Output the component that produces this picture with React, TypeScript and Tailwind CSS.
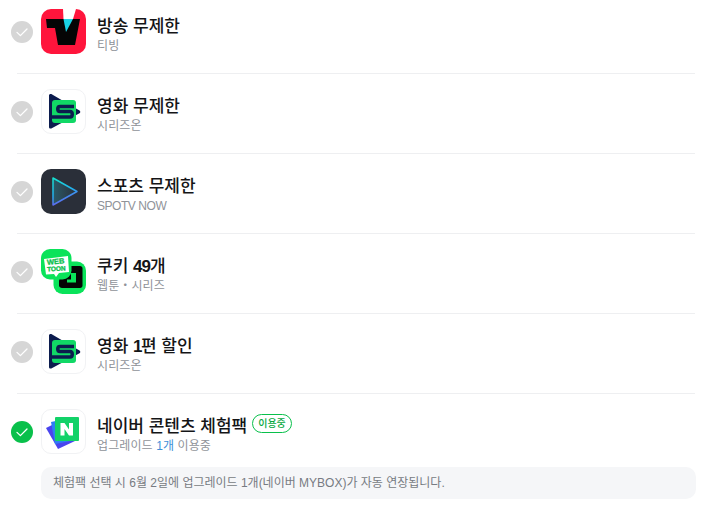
const CheckCircle = ({ active }: { active?: boolean }) => (
  <div className={`flex h-[22px] w-[22px] shrink-0 items-center justify-center rounded-full ${active ? 'bg-[#09c04b]' : 'bg-[#d6d6d6]'}`}>
    <svg width="14" height="14" viewBox="0 0 14 14" fill="none">
      <path d="M2 7.400 5.400 10.600 12 4" stroke="white" strokeWidth="1.300" strokeLinecap="round" strokeLinejoin="round" />
    </svg>
  </div>
);

const TvingIcon = () => (
  <svg width="45" height="45" viewBox="0 0 45 45">
    <rect width="45" height="45" rx="10" fill="#ff153c" />
    <path d="M22 0h13l-3 10H22.500z" fill="#fff" />
    <path d="M5 10h34l-5 26H17l-3-17H6z" fill="#050505" />
    <path d="M22.500 10H32l-7 13z" fill="#19d3e6" />
  </svg>
);

const SeriesOnIcon = () => (
  <div className="h-[45px] w-[45px] rounded-[10px] border border-[#f1f2f4] bg-white">
    <svg width="43" height="43" viewBox="0 0 43 43">
      <path d="M7 5.500c0-1.300 1.200-2 2.300-1.400L37.500 20.500c1 .6 1 2.200 0 2.800L9.300 38.400C8.200 39 7 38.300 7 37z" fill="#0c1c4e" />
      <rect x="10" y="10" width="24" height="23" rx="3" fill="#11d866" />
      <path d="M32 16.500H18c-3 0-3 5 0 5h10c3 0 3 5.500 0 5.500H10" fill="none" stroke="#0c1c4e" strokeWidth="3.500" />
    </svg>
  </div>
);

const SpotvIcon = () => (
  <svg width="45" height="45" viewBox="0 0 45 45">
    <defs>
      <linearGradient id="spotvStroke" x1="0" y1="0" x2="0.3" y2="1">
        <stop offset="0" stopColor="#16e3cf" />
        <stop offset="0.6" stopColor="#22b0ee" />
        <stop offset="1" stopColor="#6a5cf0" />
      </linearGradient>
      <linearGradient id="spotvFill" x1="0" y1="0" x2="1" y2="0">
        <stop offset="0" stopColor="#2b5a68" />
        <stop offset="1" stopColor="#2a2f39" />
      </linearGradient>
    </defs>
    <rect width="45" height="45" rx="10" fill="#2a2f39" />
    <path d="M12 9 36 22.500 12 36z" fill="url(#spotvFill)" stroke="url(#spotvStroke)" strokeWidth="1.500" strokeLinejoin="round" />
  </svg>
);

const WebtoonIcon = () => (
  <svg width="45" height="45" viewBox="0 0 45 45">
    <rect x="12.500" y="12.500" width="32.500" height="32.500" rx="9" fill="#0ae35a" />
    <path d="M21 17h18c1.500 0 2.500 1 2.500 2.500v17c0 1.500-1 2.500-2.500 2.500H21c-1.500 0-3-1-3-2.500V32z" fill="#050505" />
    <path d="M30 24h5v9.500h-9v-3h4z" fill="#0ae35a" />
    <rect width="30.500" height="30.500" rx="9" fill="#0ae35a" />
    <path d="M3 10 27 7l1 16-10 1-3 4-2-3-8 .5z" fill="#fff" />
    <text x="15" y="15" textAnchor="middle" fontSize="7.500" fontWeight="700" fill="#0ac04b" stroke="#0ac04b" strokeWidth="0.300" fontFamily="Liberation Sans" transform="rotate(-6 15 15)">WEB</text>
    <text x="15.500" y="22" textAnchor="middle" fontSize="6.500" fontWeight="700" fill="#0ac04b" stroke="#0ac04b" strokeWidth="0.300" fontFamily="Liberation Sans" transform="rotate(-3 15 22)">TOON</text>
  </svg>
);

const NaverContentsIcon = () => (
  <div className="h-[45px] w-[45px] rounded-[10px] border border-[#f1f2f4] bg-white">
    <svg width="43" height="43" viewBox="0 0 43 43">
      <path d="M4 18 20 10l13 21-17 8z" fill="#4a45ee" />
      <path d="M9 12 28 8l5 22-20 4z" fill="#2f7cf5" />
      <rect x="13" y="7" width="24" height="24" rx="1" fill="#12d268" />
      <path d="M18.500 13h4l4.500 6.500V13h4v12.500h-4L22.500 19v6.500h-4z" fill="#fff" />
    </svg>
  </div>
);

type Row = { icon: React.ReactNode; title: React.ReactNode; sub: React.ReactNode; active?: boolean; badge?: boolean };

const rows: Row[] = [
  { icon: <TvingIcon />, title: '방송 무제한', sub: '티빙' },
  { icon: <SeriesOnIcon />, title: '영화 무제한', sub: '시리즈온' },
  { icon: <SpotvIcon />, title: '스포츠 무제한', sub: <span className="tracking-[-0.45px]">SPOTV NOW</span> },
  {
    icon: <WebtoonIcon />,
    title: (
      <>
        쿠키 <span className="font-bold tracking-[-1px]">49</span>개
      </>
    ),
    sub: '웹툰・시리즈',
  },
  {
    icon: <SeriesOnIcon />,
    title: (
      <>
        영화 <span className="font-bold tracking-[-1.5px]">1</span>편 할인
      </>
    ),
    sub: '시리즈온',
  },
  {
    icon: <NaverContentsIcon />,
    title: '네이버 콘텐츠 체험팩',
    sub: (
      <>
        업그레이드 <span className="text-[#3f8fd8]">1개</span> 이용중
      </>
    ),
    active: true,
    badge: true,
  },
];

export default function App() {
  return (
    <div
      className="h-[511px] w-[713px] overflow-hidden bg-white pl-[11px] pr-[18px] pt-[9px]"
      style={{ fontFamily: '"Liberation Sans", "Noto Sans CJK KR", sans-serif' }}
    >
      {rows.map((row, i) => (
        <div key={i}>
          <div className="flex items-center">
            <CheckCircle active={row.active} />
            <div className="ml-2 shrink-0">{row.icon}</div>
            <div className="ml-[11px] flex flex-col pt-[5px]">
              <div className="flex items-center">
                <span className="text-[17px] leading-[24px] font-medium text-[#141517]">{row.title}</span>
                {row.badge && (
                  <span className="-mt-[7px] ml-[5px] flex h-[19px] items-center rounded-full border border-[#09c04b] px-[5px] text-[10px] font-medium text-[#07a83f]">
                    이용중
                  </span>
                )}
              </div>
              <span className="text-[12px] leading-[14px] tracking-[0.1px] text-[#8f9399]">{row.sub}</span>
            </div>
          </div>
          {i < rows.length - 1 && <div className="mb-[15px] ml-[6px] mt-[19px] h-px bg-[#eeeff1]" />}
        </div>
      ))}
      <div className="-mr-px ml-[30px] mt-[13px] flex h-[32px] items-center rounded-[10px] bg-[#f5f6f8] px-3 text-[12px] text-[#777b82]">
        체험팩 선택 시 6월 2일에 업그레이드 1개(네이버 MYBOX)가 자동 연장됩니다.
      </div>
    </div>
  );
}
